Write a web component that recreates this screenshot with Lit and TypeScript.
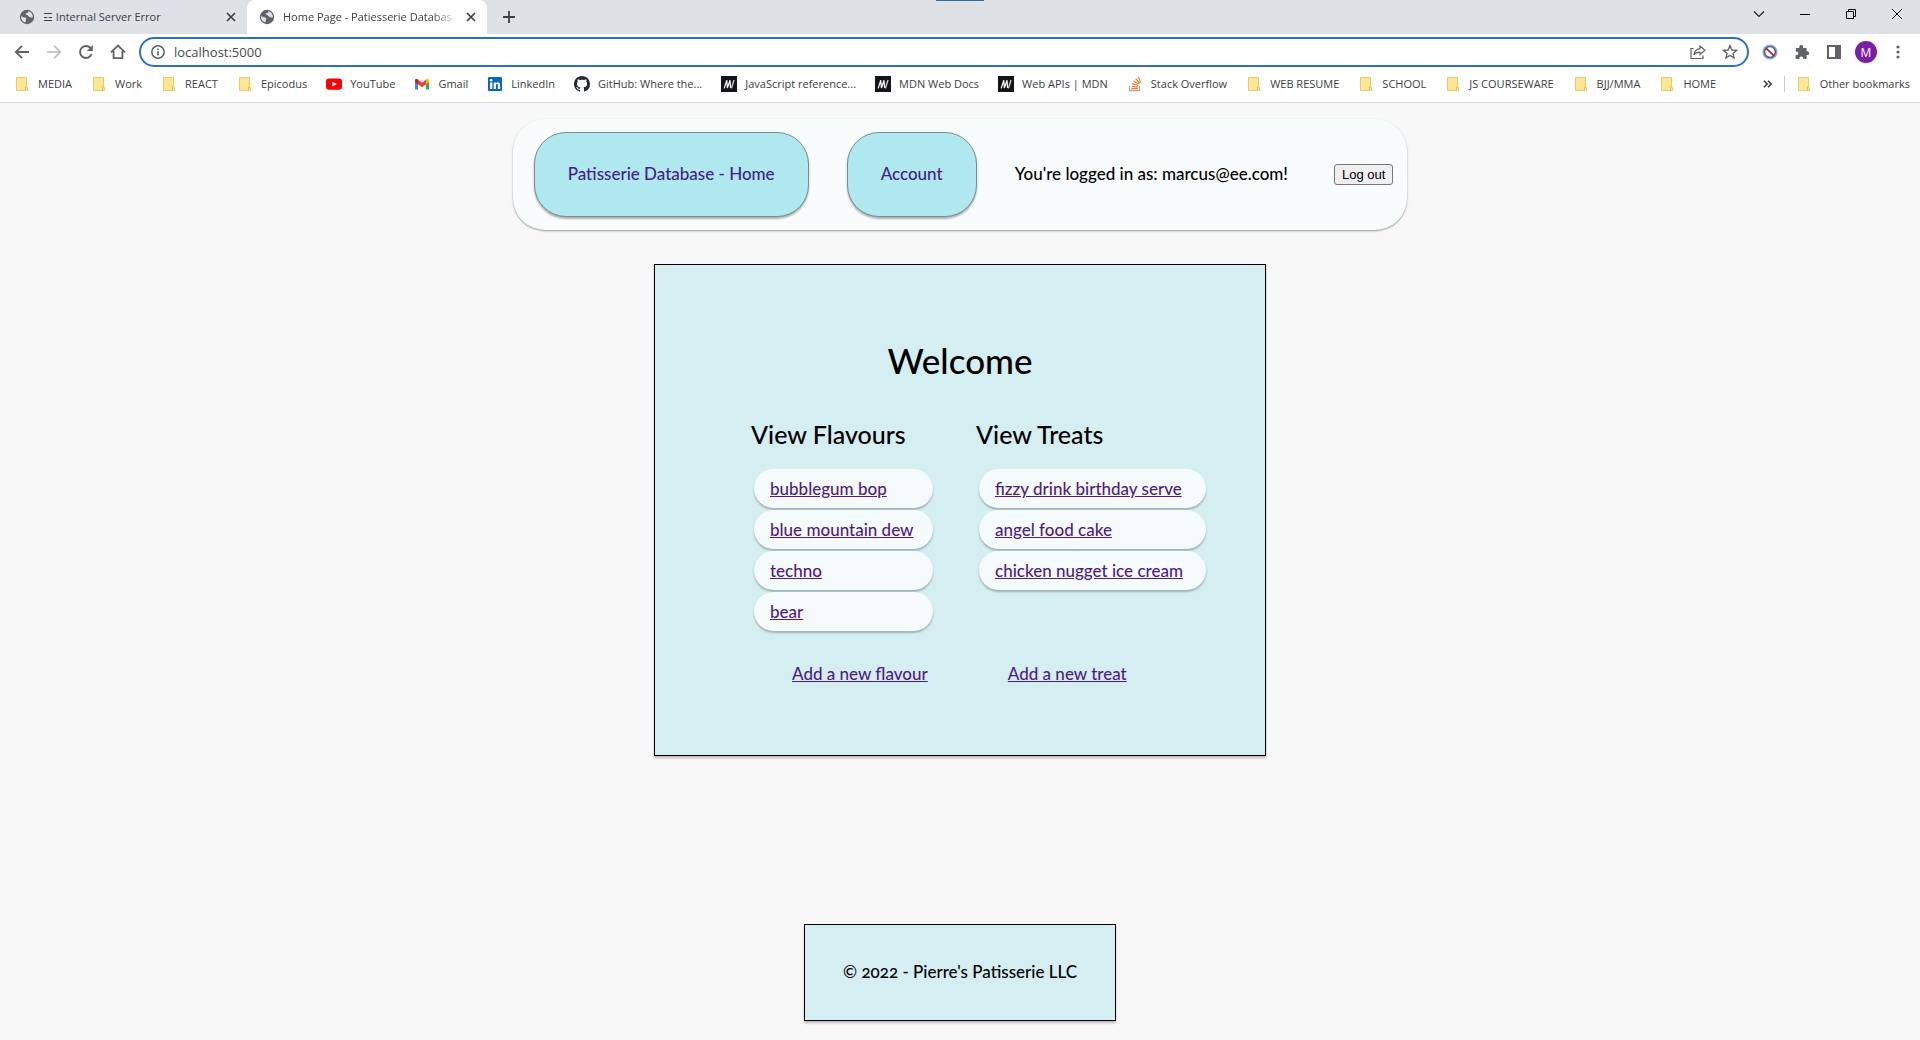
import { LitElement, html, svg, css, TemplateResult } from "lit";
import { customElement } from "lit/decorators.js";

const icon = (w: number, h: number, body: TemplateResult) =>
  html`<svg width=${w} height=${h} viewBox="0 0 ${w} ${h}" aria-hidden="true">${body}</svg>`;

const globe = () => icon(16, 16, svg`
  <circle cx="8" cy="8" r="7.2" fill="#5f6368"/>
  <path d="M2.2 7.2 C3.6 7.4 4.6 8.4 6 8.6 C7.4 8.8 7.6 9.6 7 10.6 C6.6 11.4 7 12.6 6.4 13.6 C3.8 13 2 10.8 2 8 Z" fill="#dee1e6"/>
  <path d="M9.4 2.2 C9.6 3.4 8.4 4 7.2 4.2 C6.2 4.4 6.6 5.4 7.4 5.8 C8.6 6.2 9.4 6.6 9.8 7.6 C10.4 8.6 12 8.4 13.8 8.6 C14.2 5.4 12.2 2.8 9.4 2.2 Z" fill="#dee1e6"/>`);

const cross = () => icon(10, 10, svg`<path d="M1 1 L9 9 M9 1 L1 9" stroke="#3c4043" stroke-width="1.7" fill="none"/>`);

const folder = () => icon(16, 16, svg`
  <path d="M2.5 1.5 H12.5 V11 L13.5 11.5 V14.5 H2.5 Z" fill="#ffe694" stroke="#e6cb66"/>
  <path d="M11.5 14 V11 H12.5" fill="none" stroke="#dfc04e"/>`);

const youtube = () => icon(16, 16, svg`
  <rect x="0" y="2.4" width="16" height="11.4" rx="3" fill="#f00"/>
  <path d="M6.4 5.7 L10.8 8.1 L6.4 10.5 Z" fill="#fff"/>`);

const gmail = () => icon(16, 16, svg`
  <path d="M1 4 V13.5 H4 V6.5 Z" fill="#4285f4"/>
  <path d="M15 4 V13.5 H12 V6.5 Z" fill="#34a853"/>
  <path d="M12 3.4 Q15 1.8 15 4.6 V6 L12 8.4 Z" fill="#fbbc04"/>
  <path d="M4 3.4 Q1 1.8 1 4.6 V6 L4 8.4 Z" fill="#c5221f"/>
  <path d="M4 3.6 L8 6.8 L12 3.6 V8.2 L8 11.2 L4 8.2 Z" fill="#ea4335"/>`);

const linkedin = () => icon(16, 16, svg`
  <rect x="1" y="1" width="14" height="14" rx="1" fill="#0a66c2"/>
  <circle cx="4.2" cy="4.3" r="1.3" fill="#fff"/>
  <path d="M3.1 6.4 H5.3 V13 H3.1 Z M6.7 6.4 H8.8 V7.4 Q9.5 6.2 11 6.2 Q13.1 6.2 13.1 9 V13 H10.9 V9.4 Q10.9 8.1 10 8.1 Q8.9 8.1 8.9 9.5 V13 H6.7 Z" fill="#fff"/>`);

const github = () => icon(16, 16, svg`
  <path d="M8 0C3.58 0 0 3.58 0 8c0 3.54 2.29 6.53 5.47 7.59.4.07.55-.17.55-.38 0-.19-.01-.82-.01-1.49-2.01.37-2.53-.49-2.69-.94-.09-.23-.48-.94-.82-1.13-.28-.15-.68-.52-.01-.53.63-.01 1.08.58 1.23.82.72 1.21 1.87.87 2.33.66.07-.52.28-.87.51-1.07-1.78-.2-3.64-.89-3.64-3.95 0-.87.31-1.59.82-2.15-.08-.2-.36-1.02.08-2.12 0 0 .67-.21 2.2.82.64-.18 1.32-.27 2-.27s1.36.09 2 .27c1.53-1.04 2.2-.82 2.2-.82.44 1.1.16 1.92.08 2.12.51.56.82 1.27.82 2.15 0 3.07-1.87 3.75-3.65 3.95.29.25.54.73.54 1.48 0 1.07-.01 1.93-.01 2.2 0 .21.15.46.55.38A8.01 8.01 0 0 0 16 8c0-4.42-3.58-8-8-8Z" fill="#24292f"/>`);

const mdn = () => icon(16, 16, svg`
  <rect width="16" height="16" fill="#15141a"/>
  <path d="M3.2 12.4 L5.8 4.2 L6.4 12 L9 4.2 L9.6 12" stroke="#fff" stroke-width="1.2" fill="none"/>
  <path d="M10.4 12.4 L13 4" stroke="#ccc" stroke-width="1.4"/>`);

const stack = () => icon(16, 16, svg`
  <path d="M2.5 10 V14.5 H12.5 V10" fill="none" stroke="#a9abad" stroke-width="1.3"/>
  <path d="M4.4 12.6 H10.8 M4.5 10.3 L10.9 11.1 M5 7.6 L11.2 9.3 M6.4 4.9 L11.8 8.1 M8.6 2.6 L12.6 7.2 M11.6 1 L13.6 6.6" stroke="#f48024" stroke-width="1.2" fill="none"/>`);

interface Bookmark { label: string; art: () => TemplateResult; }

const bookmarks: Bookmark[] = [
  { label: "MEDIA", art: folder },
  { label: "Work", art: folder },
  { label: "REACT", art: folder },
  { label: "Epicodus", art: folder },
  { label: "YouTube", art: youtube },
  { label: "Gmail", art: gmail },
  { label: "LinkedIn", art: linkedin },
  { label: "GitHub: Where the...", art: github },
  { label: "JavaScript reference...", art: mdn },
  { label: "MDN Web Docs", art: mdn },
  { label: "Web APIs | MDN", art: mdn },
  { label: "Stack Overflow", art: stack },
  { label: "WEB RESUME", art: folder },
  { label: "SCHOOL", art: folder },
  { label: "JS COURSEWARE", art: folder },
  { label: "BJJ/MMA", art: folder },
  { label: "HOME", art: folder },
];

@customElement("browser-chrome")
export class BrowserChrome extends LitElement {
  static styles = css`
    :host { display: block; background: #fff; color: #3c4043; font-family: "Open Sans", "Noto Sans", sans-serif; font-size: 11px; font-weight: 400; font-variant-numeric: lining-nums; border-bottom: 1px solid #d9dadc; }
    * { box-sizing: border-box; }
    svg { display: block; flex: none; }
    button { border: 0; background: none; padding: 0; margin: 0; display: flex; align-items: center; justify-content: center; font: inherit; color: inherit; }
    .strip { display: flex; height: 34px; background: #dee1e6; position: relative; }
    .accent { position: absolute; top: 0; left: 50%; width: 48px; height: 1px; margin-left: -24px; background: #2f6fa8; }
    .tab { display: flex; align-items: center; width: 240px; padding: 0 11px 0 12px; gap: 8px; }
    .first { margin-left: 7px; }
    .active { background: #fff; border-radius: 8px 8px 0 0; position: relative; }
    .title { flex: 1; min-width: 0; white-space: nowrap; overflow: hidden; line-height: 20px; }
    .active .title { mask-image: linear-gradient(to right, #000 85%, transparent); }
    .close { width: 10px; height: 16px; }
    .plus { width: 44px; height: 34px; }
    .window { display: flex; margin-left: auto; height: 28px; }
    .window button { width: 46px; }
    .bar { display: flex; align-items: center; height: 36px; padding: 0 6px; }
    .tool { width: 32px; height: 28px; }
    .omni { flex: 1; display: flex; align-items: center; height: 30px; margin: 0 5px 0 5px; padding: 0 5px 0 10px; border: 2px solid #2f6fc9; border-radius: 15px; gap: 8px; }
    .field { flex: 1; display: flex; padding-left: 1px; }
    .address { flex: 1; min-width: 0; border: 0; outline: 0; padding: 0; background: none; font: inherit; font-size: 13px; line-height: 20px; color: #46494d; }
    .omni .tool { width: 24px; }
    .marks { display: flex; align-items: center; height: 32px; padding: 0 10px 4px 14px; gap: 19px; }
    .mark { display: flex; align-items: center; gap: 8px; color: inherit; text-decoration: none; white-space: nowrap; line-height: 18px; }
    .rest { margin-left: auto; display: flex; align-items: center; gap: 11px; }
    .rule { width: 1px; height: 16px; background: #c8cacd; }
    .avatar { width: 22px; height: 22px; margin: 0 5px; border-radius: 50%; background: #7b1fa2; color: #fff; font-size: 12px; }
    .actions { display: flex; align-items: center; }
  `;

  render() {
    return html`
      <div class="strip">
        <div class="accent"></div>
        <div class="tab first">${globe()}<span class="title">☲ Internal Server Error</span>
          <button class="close" aria-label="Close tab">${cross()}</button></div>
        <div class="tab active">${globe()}<span class="title">Home Page - Patiesserie Databas</span>
          <button class="close" aria-label="Close tab">${cross()}</button></div>
        <button class="plus" aria-label="New tab">${icon(12, 12, svg`<path d="M6 0 V12 M0 6 H12" stroke="#3c4043" stroke-width="1.8"/>`)}</button>
        <div class="window">
          <button aria-label="Search tabs">${icon(12, 12, svg`<path d="M1 3.5 L6 8.5 L11 3.5" fill="none" stroke="#222" stroke-width="1.2"/>`)}</button>
          <button aria-label="Minimize">${icon(10, 10, svg`<path d="M0 5.5 H10" stroke="#000"/>`)}</button>
          <button aria-label="Restore">${icon(10, 10, svg`<path d="M.5 2.5 H7.5 V9.5 H.5 Z M2.5 2.5 V.5 H9.5 V7.5 H7.5" fill="none" stroke="#000"/>`)}</button>
          <button aria-label="Close">${icon(10, 10, svg`<path d="M0 0 L10 10 M10 0 L0 10" stroke="#000" fill="none"/>`)}</button>
        </div>
      </div>
      <div class="bar">
        <button class="tool" aria-label="Back">${icon(16, 16, svg`<path d="M15 8 H2 M8 1.8 L1.8 8 L8 14.2" fill="none" stroke="#5f6368" stroke-width="1.8"/>`)}</button>
        <button class="tool" aria-label="Forward">${icon(16, 16, svg`<path d="M1 8 H14 M8 1.8 L14.2 8 L8 14.2" fill="none" stroke="#b9bbbe" stroke-width="1.6"/>`)}</button>
        <button class="tool" aria-label="Reload">${icon(16, 16, svg`<path d="M13.6 10.2 A6 6 0 1 1 12.4 3.9" fill="none" stroke="#5f6368" stroke-width="1.9"/><path d="M14.8 1 V7 H8.8 Z" fill="#5f6368"/>`)}</button>
        <button class="tool" aria-label="Home">${icon(16, 16, svg`<path d="M1 8.4 L8 1.6 L15 8.4 M3.6 7 V14.2 H12.4 V7" fill="none" stroke="#5f6368" stroke-width="1.8"/>`)}</button>
        <div class="omni">
          ${icon(14, 14, svg`<circle cx="7" cy="7" r="6.2" fill="none" stroke="#5f6368" stroke-width="1.5"/><path d="M7 6.2 V10.4 M7 3.4 V5" stroke="#5f6368" stroke-width="1.6"/>`)}
          <div class="field"><input class="address" aria-label="Address" value="localhost:5000"></div>
          <button class="tool" aria-label="Share">${icon(16, 16, svg`<path d="M3.5 4.5 H1 V14.5 H13 V11.5" fill="none" stroke="#5f6368" stroke-width="1.2"/><path d="M10 2 L15 6.3 L10 10.5 V8.2 Q6 8 3.8 11 Q4.6 5.4 10 4.6 Z" fill="none" stroke="#5f6368" stroke-width="1.2"/>`)}</button>
          <button class="tool" aria-label="Bookmark this page">${icon(16, 16, svg`<path d="M8 1.8 L9.9 6 L14.4 6.4 L11 9.4 L12 13.9 L8 11.5 L4 13.9 L5 9.4 L1.6 6.4 L6.1 6 Z" fill="none" stroke="#5f6368" stroke-width="1.4"/>`)}</button>
        </div>
        <div class="actions">
          <button class="tool" aria-label="Blocker extension">${icon(16, 16, svg`<circle cx="8" cy="8" r="7.6" fill="#6fb0f0"/><circle cx="8" cy="8" r="5.4" fill="#fff" stroke="#8a3f4e" stroke-width="1.4"/><path d="M4.2 4.4 L11.8 11.6" stroke="#8a3440" stroke-width="1.8"/>`)}</button>
          <button class="tool" aria-label="Extensions">${icon(16, 16, svg`<path d="M2 4 H5.4 Q4.9 1 7.2 1 Q9.5 1 9 4 H12.6 V7.4 Q15.2 7 15.2 9.2 Q15.2 11.4 12.6 11 V15 H9.2 Q9.6 12.4 7.3 12.4 Q5 12.4 5.4 15 H1.6 V11.2 Q4.4 11.4 4.4 9.4 Q4.4 7.4 1.6 7.6 Z" fill="#5f6368"/>`)}</button>
          <button class="tool" aria-label="Side panel">${icon(14, 14, svg`<path d="M0 0 H14 V14 H0 Z M2 2 V12 H8 V2 Z" fill="#5f6368" fill-rule="evenodd"/>`)}</button>
          <button class="avatar" aria-label="Profile">M</button>
          <button class="tool" aria-label="Menu">${icon(4, 14, svg`<circle cx="2" cy="2" r="1.6" fill="#5f6368"/><circle cx="2" cy="7" r="1.6" fill="#5f6368"/><circle cx="2" cy="12" r="1.6" fill="#5f6368"/>`)}</button>
        </div>
      </div>
      <nav class="marks" aria-label="Bookmarks">
        ${bookmarks.map((b) => html`<a class="mark" href="#">${b.art()}<span>${b.label}</span></a>`)}
        <div class="rest">
          <button aria-label="More bookmarks">${icon(10, 8, svg`<path d="M1 .8 L4.2 4 L1 7.2 M5 .8 L8.2 4 L5 7.2" fill="none" stroke="#3c4043" stroke-width="1.6"/>`)}</button>
          <div class="rule"></div>
          <a class="mark" href="#">${folder()}<span>Other bookmarks</span></a>
        </div>
      </nav>
    `;
  }
}

const flavours = ["bubblegum bop", "blue mountain dew", "techno", "bear"];
const treats = ["fizzy drink birthday serve", "angel food cake", "chicken nugget ice cream"];

@customElement("app-root")
export class AppRoot extends LitElement {
  static styles = css`
    :host { display: flex; flex-direction: column; min-height: 100vh; background: #f8f8f8; color: #000; font-family: Lato, "Open Sans", sans-serif; font-size: 17px; font-weight: 500; line-height: 19px; font-variant-numeric: oldstyle-nums; }
    * { box-sizing: border-box; }
    a { color: #4f1c86; }
    .nav { display: flex; align-items: center; align-self: center; gap: 38px; margin-top: 16px; padding: 13px 14px 13px 21px; border-radius: 32px; background: #f8fcfd; box-shadow: 0 1px 2px rgba(0, 0, 0, 0.4); }
    .pill { padding: 31px 33px 33px; border: 1px solid #7d8c90; border-radius: 32px; background: #b0e8ef; color: #45208a; text-decoration: none; box-shadow: 0 2px 2px rgba(0, 0, 0, 0.3); }
    .who { margin: 0; padding: 0 8px 2px 0; }
    .logout { height: 21px; padding: 0 7px; border: 1px solid #767676; border-radius: 3px; background: #efefef; color: #000; font: 13px/15px "Liberation Sans", Arial, sans-serif; }
    .card { align-self: center; width: 612px; max-width: 100%; margin-top: 34px; padding: 76px 0 72px 96px; border: 1px solid #000; background: #d5eef1; box-shadow: 0 2px 2px rgba(60, 20, 30, 0.3); }
    h1 { margin: 0 96px 0 0; text-align: center; font-size: 35px; line-height: 38px; font-weight: 500; }
    .columns { display: grid; grid-template-columns: 184px 232px; column-gap: 41px; margin-top: 41px; }
    h2 { margin: 0 0 21px; font-size: 25px; line-height: 28px; font-weight: 500; }
    .list { list-style: none; margin: 0 2px 0 3px; padding: 0; display: grid; gap: 2px; }
    .list li { padding: 10px 16px; border-radius: 20px; background: #f5fbfd; box-shadow: 0 2px 2px rgba(0, 0, 0, 0.25); }
    .adds { display: flex; gap: 80px; margin-top: 33px; padding-left: 41px; }
    footer { align-self: center; margin: auto 0 19px; padding: 37px 38px 39px; border: 1px solid #000; background: #d5eef1; box-shadow: 0 2px 2px rgba(60, 20, 30, 0.3); }
  `;

  private column(title: string, items: string[]) {
    return html`<section><h2>${title}</h2>
      <ul class="list">${items.map((i) => html`<li><a href="#">${i}</a></li>`)}</ul></section>`;
  }

  render() {
    return html`
      <browser-chrome></browser-chrome>
      <nav class="nav">
        <a class="pill" href="#">Patisserie Database - Home</a>
        <a class="pill" href="#">Account</a>
        <p class="who">You're logged in as: marcus@ee.com!</p>
        <button class="logout">Log out</button>
      </nav>
      <main class="card">
        <h1>Welcome</h1>
        <div class="columns">
          ${this.column("View Flavours", flavours)}
          ${this.column("View Treats", treats)}
        </div>
        <div class="adds"><a href="#">Add a new flavour</a><a href="#">Add a new treat</a></div>
      </main>
      <footer>© 2022 - Pierre's Patisserie LLC</footer>
    `;
  }
}
